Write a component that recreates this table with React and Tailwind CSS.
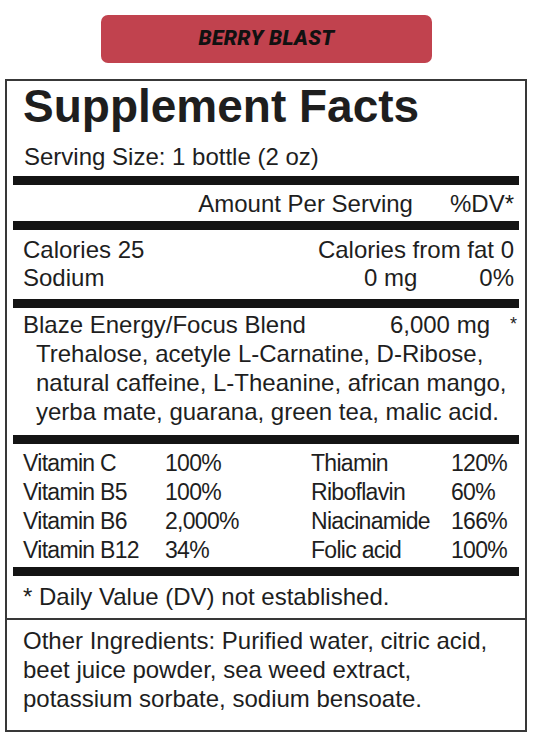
const vitamins = [
  ["Vitamin C", "100%", "Thiamin", "120%"],
  ["Vitamin B5", "100%", "Riboflavin", "60%"],
  ["Vitamin B6", "2,000%", "Niacinamide", "166%"],
  ["Vitamin B12", "34%", "Folic acid", "100%"],
];

function Bar({ className = "" }) {
  return <div className={"mx-[6px] h-[9px] bg-[#141414] " + className} />;
}

export default function App() {
  return (
    <div className="min-h-[740px] w-[533px] bg-white font-['Liberation_Sans',Arial,sans-serif] text-[#1e1e1e]">
      <div className="pt-[15px]">
        <div className="ml-[101px] flex h-[48px] w-[331px] items-center justify-center rounded-[7px] bg-[#c1424e]">
          <span className="font-['Roboto',sans-serif] text-[21px] font-black italic tracking-[0.3px] text-[#111]">
            BERRY BLAST
          </span>
        </div>
      </div>

      <div className="ml-[5px] mt-[16px] w-[522px] border-2 border-[#383838]">
        {/* top section */}
        <div className="pb-[7px]">
          <h1 className="pl-[16px] pt-[2px] text-[46px] font-bold leading-[46px]">
            Supplement Facts
          </h1>
          <div className="mt-[14px] pl-[17px] text-[24px] leading-[28px]">
            Serving Size: 1 bottle (2 oz)
          </div>
          <Bar className="mt-[5px]" />
          <div className="mt-[5px] flex justify-end gap-[37px] pr-[11px] text-[24px] leading-[28px]">
            <span>Amount Per Serving</span>
            <span>%DV*</span>
          </div>
          <Bar className="mt-[3px]" />
          <div className="mt-[6px] pl-[16px] pr-[11px] text-[24px] leading-[28px]">
            <div className="flex justify-between">
              <span>Calories 25</span>
              <span>Calories from fat 0</span>
            </div>
            <div className="flex">
              <span>Sodium</span>
              <span className="ml-auto">0 mg</span>
              <span className="ml-[62px]">0%</span>
            </div>
          </div>
          <Bar className="mt-[7px]" />
          <div className="mt-[2px] pl-[16px] pr-[11px] text-[24px] leading-[29px]">
            <div className="flex">
              <span>Blaze Energy/Focus Blend</span>
              <span className="ml-auto">6,000 mg</span>
              <span className="ml-[20px] mr-[-3px] text-[18px]">*</span>
            </div>
            <div className="pl-[13px]">
              Trehalose, acetyle L-Carnatine, D-Ribose,
              <br />
              natural caffeine, L-Theanine, african mango,
              <br />
              yerba mate, guarana, green tea, malic acid.
            </div>
          </div>
          <Bar className="mt-[9px]" />
          <div className="mt-[5px] grid grid-cols-[142px_146px_140px_1fr] pl-[16px] text-[23px] leading-[29px] tracking-[-0.7px]">
            {vitamins.map((row) =>
              row.map((cell, i) => <span key={row[0] + i}>{cell}</span>)
            )}
          </div>
          <Bar className="mt-[2px]" />
          <div className="mt-[6px] pl-[16px] text-[24px] leading-[29px]">
            * Daily Value (DV) not established.
          </div>
        </div>

        {/* other ingredients */}
        <div className="border-t-2 border-[#383838] pb-[17px] pl-[16px] pt-[6px] text-[24px] leading-[29px]">
          Other Ingredients: Purified water, citric acid,
          <br />
          beet juice powder, sea weed extract,
          <br />
          potassium sorbate, sodium bensoate.
        </div>
      </div>
    </div>
  );
}
